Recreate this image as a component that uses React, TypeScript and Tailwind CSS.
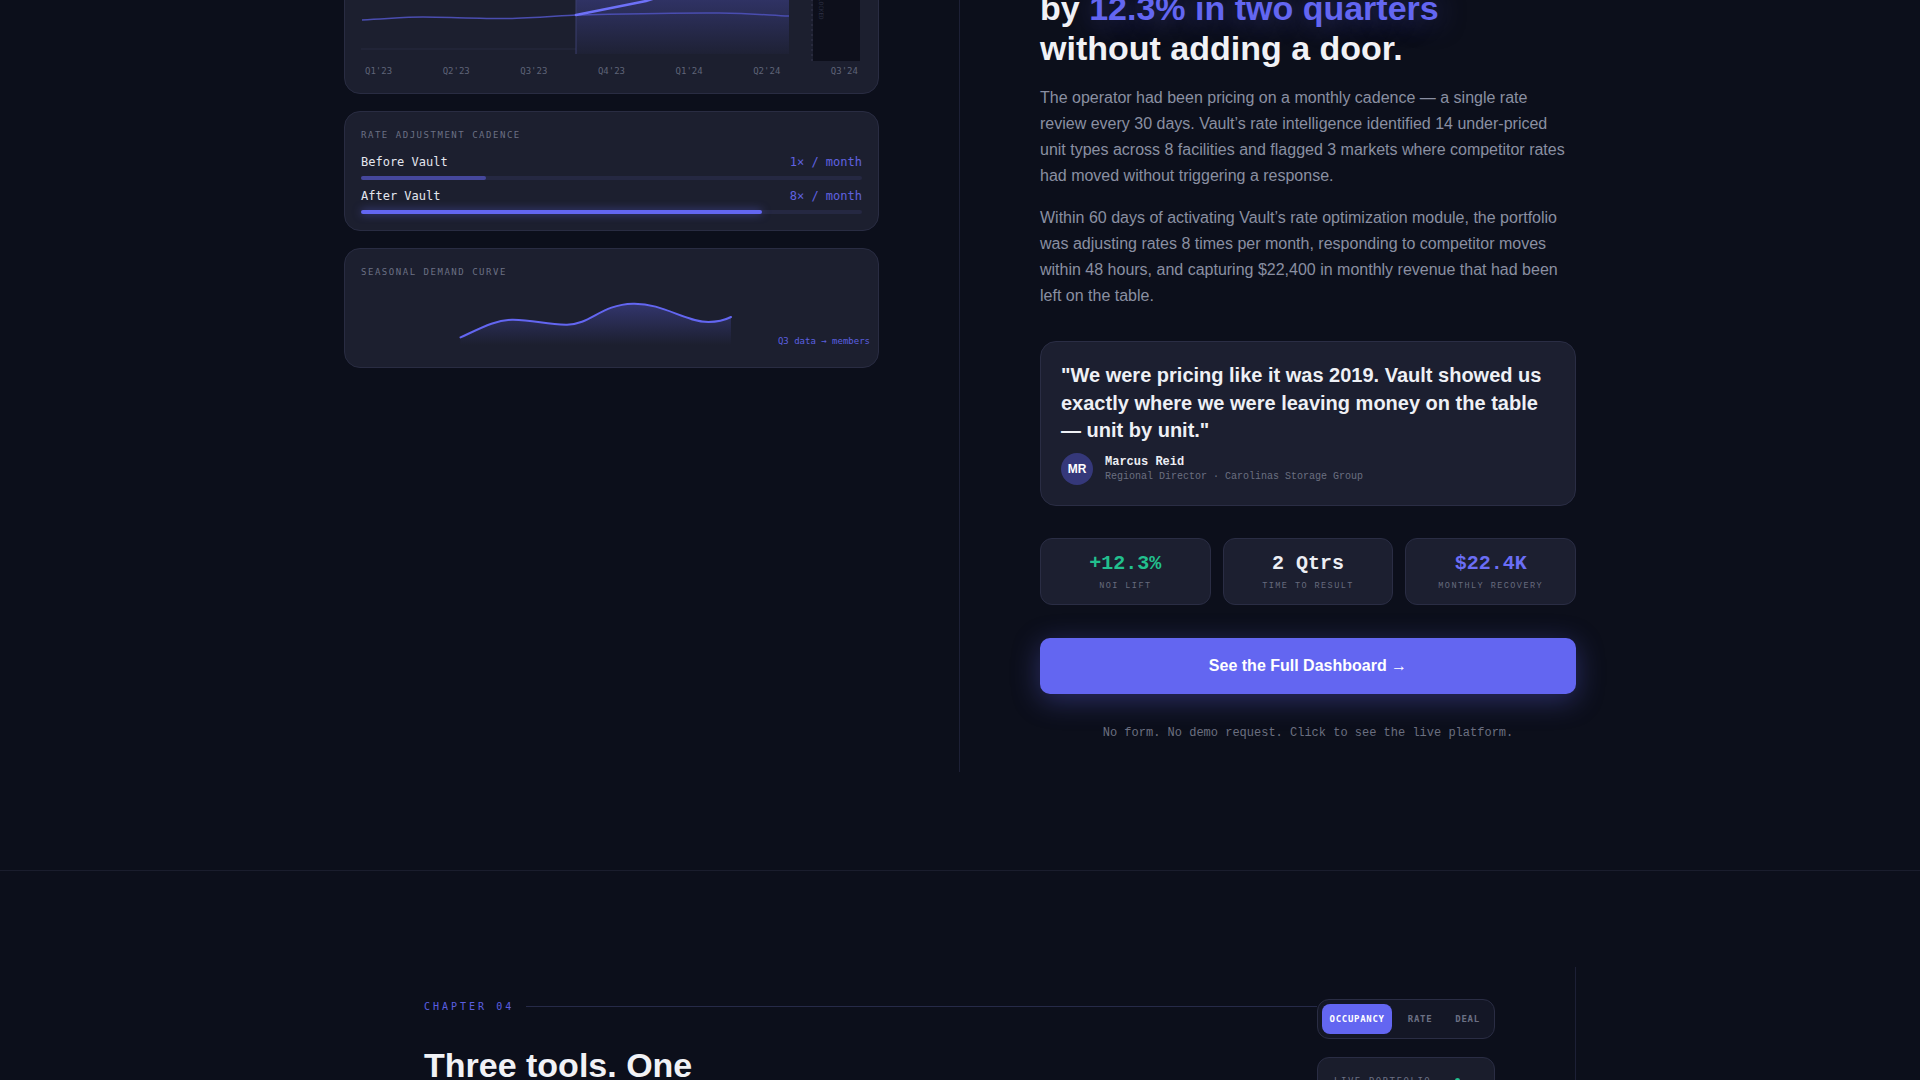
import React from "react";

const mono = "font-['DejaVu_Sans_Mono',monospace]";
const lmono = "font-['Liberation_Mono',monospace]";

const quarters = ["Q1'23", "Q2'23", "Q3'23", "Q4'23", "Q1'24", "Q2'24", "Q3'24"];

const cadence = [
  { label: "Before Vault", value: "1× / month", pct: 25, bar: "bg-[#45479c]" },
  { label: "After Vault", value: "8× / month", pct: 80, bar: "bg-[#6366f1] shadow-[0_0_8px_rgba(99,102,241,0.55)]" },
];

const stats = [
  { value: "+12.3%", label: "NOI LIFT", color: "text-[#22c08e]" },
  { value: "2 Qtrs", label: "TIME TO RESULT", color: "text-[#eceef4]" },
  { value: "$22.4K", label: "MONTHLY RECOVERY", color: "text-[#6b6ef5]" },
];

function TrajectoryCard() {
  return (
    <div className="rounded-2xl border border-[#292c42] bg-[#1c1f2f] px-4 pb-4 pt-4">
      <div className={`${mono} text-[9px] leading-[14px] tracking-[0.17em] text-[#6b7084]`}>
        NOI TRAJECTORY — 8 FACILITIES
      </div>
      <svg width="501" height="67" viewBox="0 0 501 67" className="mt-[13px] block">
        <defs>
          <linearGradient id="hl" x1="0" y1="0" x2="0" y2="1">
            <stop offset="0" stopColor="#6366f1" stopOpacity="0.3" />
            <stop offset="1" stopColor="#6366f1" stopOpacity="0.03" />
          </linearGradient>
        </defs>
        <line x1="0" y1="55" x2="215" y2="55" stroke="#272a40" strokeWidth="1" />
        <rect x="215" y="0" width="213" height="60" fill="url(#hl)" />
        <line x1="215" y1="0" x2="215" y2="60" stroke="#3b3e6e" strokeWidth="1" />
        <path
          d="M1 26 C 30 24.5, 45 23, 62 23 S 120 24.5, 144 24.5 S 200 21.5, 215 21 C 260 20, 320 18.5, 358 19 S 410 21.5, 428 22"
          fill="none"
          stroke="#4a4db0"
          strokeWidth="1.5"
        />
        <path
          d="M215 21 L 285 7 L 345 -12"
          fill="none"
          stroke="#6e71f8"
          strokeWidth="2.5"
          strokeLinecap="round"
        />
        <line x1="451" y1="0" x2="451" y2="67" stroke="#34374f" strokeDasharray="2 3" />
        <rect x="452" y="0" width="47" height="67" fill="#0d0f1b" />
        <text
          x="458"
          y="4"
          fill="#2c2f44"
          fontSize="6"
          fontFamily="DejaVu Sans Mono, monospace"
          transform="rotate(90 458 4)"
        >
          LOCKED
        </text>
      </svg>
      <div className={`${mono} mt-1 flex justify-between px-1 text-[9px] leading-3 text-[#5f6478]`}>
        {quarters.map((q) => (
          <span key={q}>{q}</span>
        ))}
      </div>
    </div>
  );
}

function CadenceCard() {
  return (
    <div className="rounded-2xl border border-[#292c42] bg-[#1c1f2f] p-4">
      <div className={`${mono} text-[9px] leading-[14px] tracking-[0.17em] text-[#6b7084]`}>
        RATE ADJUSTMENT CADENCE
      </div>
      {cadence.map((row, i) => (
        <div key={row.label} className={i === 0 ? "mt-[11px]" : "mt-[7px]"}>
          <div className={`${mono} flex items-center justify-between text-[12px] leading-[18px]`}>
            <span className="text-[#e4e6ee]">{row.label}</span>
            <span className="text-[#6062e0]">{row.value}</span>
          </div>
          <div className="mt-[5px] h-1 rounded-full bg-[#252842]">
            <div className={`h-full rounded-full ${row.bar}`} style={{ width: `${row.pct}%` }} />
          </div>
        </div>
      ))}
    </div>
  );
}

function SeasonalCard() {
  const curve =
    "M99.5 52.4 C 122 42, 135 35, 151 34.7 C 172 34.4, 186 40, 206 39.7 C 230 39.4, 240 19.5, 272 18.7 C 302 18, 324 37, 347.5 37 C 357 37, 364 35, 370 32";
  return (
    <div className="relative rounded-2xl border border-[#292c42] bg-[#1c1f2f] p-4">
      <div className={`${mono} text-[9px] leading-[14px] tracking-[0.17em] text-[#6b7084]`}>
        SEASONAL DEMAND CURVE
      </div>
      <svg width="501" height="66" viewBox="0 0 501 66" className="mt-1.5 block">
        <defs>
          <linearGradient id="sd" x1="0" y1="0" x2="0" y2="1">
            <stop offset="0" stopColor="#6366f1" stopOpacity="0.32" />
            <stop offset="1" stopColor="#6366f1" stopOpacity="0" />
          </linearGradient>
        </defs>
        <path d={`${curve} L 370 60 L 99.5 60 Z`} fill="url(#sd)" />
        <path d={curve} fill="none" stroke="#6366f1" strokeWidth="2" strokeLinecap="round" />
      </svg>
      <span className={`${mono} absolute bottom-5 right-2 text-[9px] leading-3 text-[#5b5fe0]`}>
        Q3 data → members
      </span>
    </div>
  );
}

function CaseStudy() {
  return (
    <div className="flex flex-col">
      <h2 className="-mt-[2px] mb-[17px] text-[34px] font-bold leading-[40px] text-[#f1f2f6]">
        How one operator lifted NOI
        <br />
        by{" "}
        <span className="text-[#6366f1] [text-shadow:0_0_28px_rgba(99,102,241,0.5)]">
          12.3% in two quarters
        </span>
        <br />
        without adding a door.
      </h2>
      <p className="text-[16px] leading-[26px] text-[#8a8fa2]">
        The operator had been pricing on a monthly cadence — a single rate review every 30 days.
        Vault’s rate intelligence identified 14 under-priced unit types across 8 facilities and
        flagged 3 markets where competitor rates had moved without triggering a response.
      </p>
      <p className="mt-4 text-[16px] leading-[26px] text-[#8a8fa2]">
        Within 60 days of activating Vault’s rate optimization module, the portfolio was adjusting
        rates 8 times per month, responding to competitor moves within 48 hours, and capturing
        $22,400 in monthly revenue that had been left on the table.
      </p>

      <div className="mt-8 rounded-2xl border border-[#2a2d44] bg-[#1c1f30] p-5">
        <p className="text-[20px] font-bold leading-[27.5px] text-[#eef0f5]">
          "We were pricing like it was 2019. Vault showed us exactly where we were leaving money on
          the table — unit by unit."
        </p>
        <div className="mt-2 flex items-center gap-3">
          <div className="flex h-8 w-8 items-center justify-center rounded-full bg-[#35387a] text-[12px] font-bold text-white">
            MR
          </div>
          <div className={lmono}>
            <div className="text-[12px] font-bold leading-4 text-[#eceef4]">Marcus Reid</div>
            <div className="text-[10px] leading-[14px] text-[#6b6f80]">
              Regional Director · Carolinas Storage Group
            </div>
          </div>
        </div>
      </div>

      <div className="mt-8 grid grid-cols-3 gap-3">
        {stats.map((s) => (
          <div
            key={s.label}
            className="flex flex-col items-center rounded-xl border border-[#2a2d44] bg-[#1c1f30] pb-3 pt-[13px]"
          >
            <div className={`${lmono} text-[20px] font-bold leading-6 ${s.color}`}>{s.value}</div>
            <div className={`${lmono} mt-1 text-[8.5px] leading-3 tracking-[0.17em] text-[#676b7e]`}>
              {s.label}
            </div>
          </div>
        ))}
      </div>

      <button className="mt-[33px] flex h-[56px] w-full items-center justify-center rounded-[10px] bg-[#6366f1] text-[16px] font-bold text-white shadow-[0_6px_28px_rgba(99,102,241,0.35)]">
        See the Full Dashboard →
      </button>

      <p className={`${lmono} mt-[31px] text-center text-[12px] leading-4 text-[#6b6f80]`}>
        No form. No demo request. Click to see the live platform.
      </p>
    </div>
  );
}

function ChapterFour() {
  const tabs = ["OCCUPANCY", "RATE", "DEAL"];
  return (
    <div className="pt-[96px]">
      <div className="mx-auto h-[400px] w-[1232px] border-r border-[#1d2036] px-20 pt-8">
        <div className="flex">
          <div className="flex-1">
            <div className="flex items-center gap-3 pt-px">
              <span className={`${mono} text-[10px] leading-[14px] tracking-[0.3em] text-[#5b5fe0]`}>
                CHAPTER 04
              </span>
              <div className="h-px flex-1 bg-[#262a48]" />
            </div>
            <h2 className="mt-[31px] max-w-[380px] text-[34px] font-bold leading-[40px] text-[#f1f2f6]">
              Three tools. One platform.
            </h2>
          </div>
          <div className="w-[178px]">
            <div className="flex gap-2 rounded-xl border border-[#2a2d44] bg-[#141726] p-1">
              {tabs.map((t, i) => (
                <button
                  key={t}
                  className={`${mono} rounded-lg px-[7.5px] py-[9px] text-[9px] font-bold leading-3 tracking-[0.08em] ${
                    i === 0 ? "bg-[#6366f1] text-white" : "text-[#6b7084]"
                  }`}
                >
                  {t}
                </button>
              ))}
            </div>
            <div className="mt-[18px] h-[160px] rounded-xl border border-[#2a2d44] bg-[#1a1d2c] p-4">
              <div className="flex items-center">
                <span className={`${mono} text-[9px] leading-[14px] tracking-[0.17em] text-[#6b7084]`}>
                  LIVE PORTFOLIO
                </span>
                <span className="ml-6 h-[5px] w-[5px] rounded-full bg-[#22c08e]" />
              </div>
            </div>
          </div>
        </div>
      </div>
    </div>
  );
}

export default function App() {
  return (
    <div className="h-screen overflow-hidden bg-[#0c0f1b] font-['Liberation_Sans',Arial,sans-serif]">
      <section className="-mt-[50px] border-b border-[#1a1d2d] pb-[98px]">
        <div className="mx-auto grid w-[1232px] grid-cols-[535px_1px_536px] gap-x-20">
          <div className="flex flex-col gap-[17px] self-start">
            <TrajectoryCard />
            <CadenceCard />
            <SeasonalCard />
          </div>
          <div className="bg-[#1d2036]" />
          <div className="pb-[31px]">
            <CaseStudy />
          </div>
        </div>
      </section>
      <ChapterFour />
    </div>
  );
}
